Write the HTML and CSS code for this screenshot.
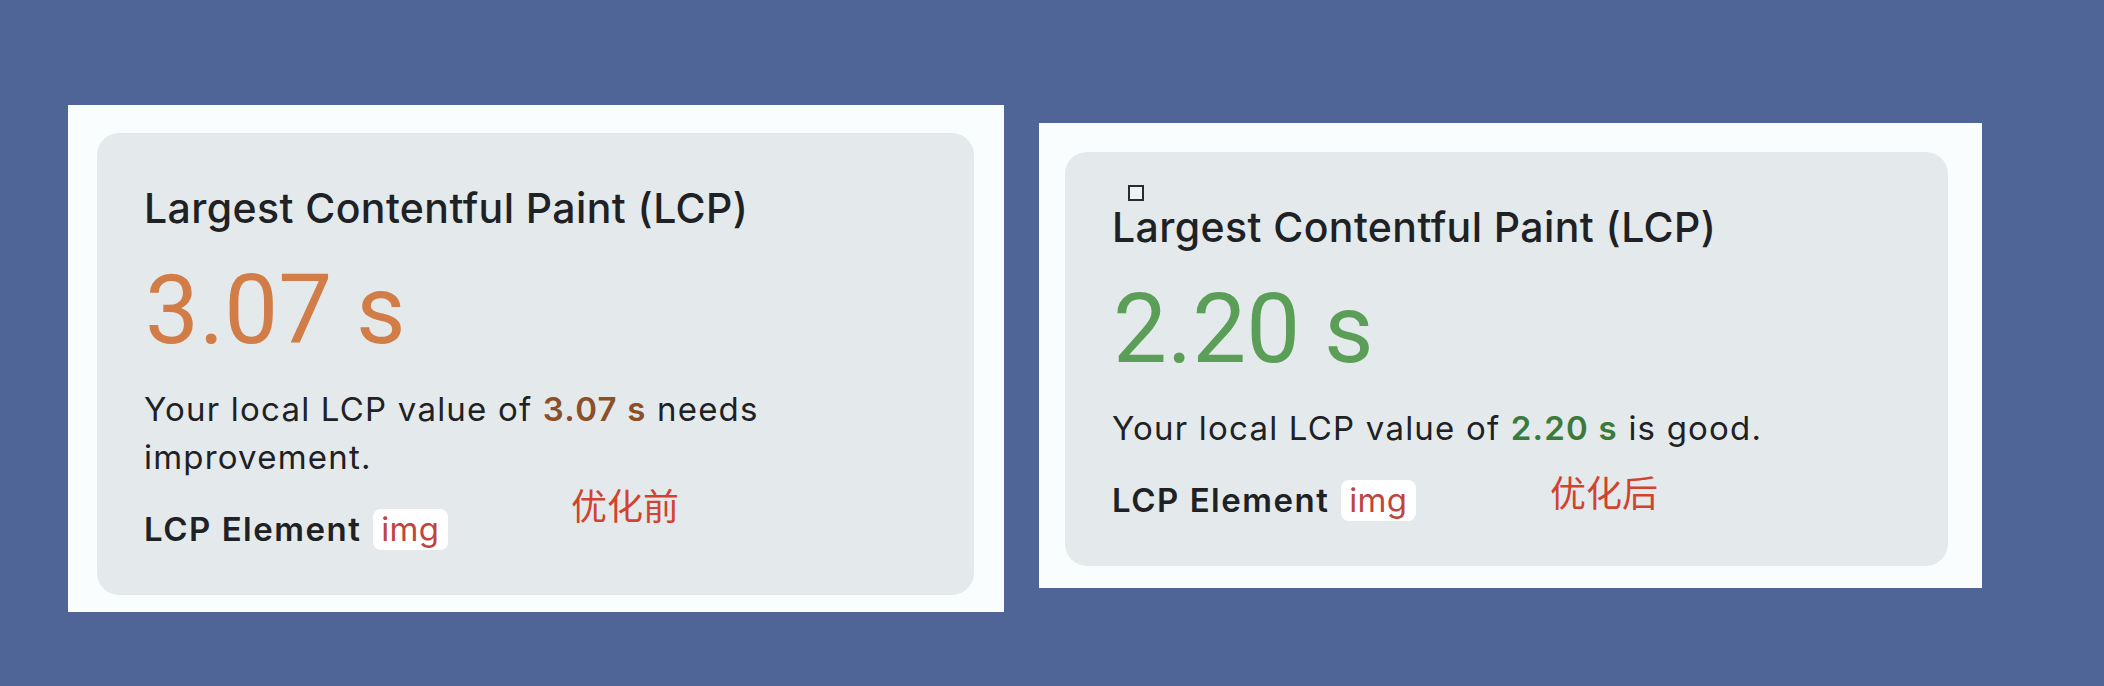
FILE: index.html
```html
<!DOCTYPE html>
<html lang="zh-CN">
<head>
  <meta charset="UTF-8" />
  <meta name="viewport" content="width=device-width, initial-scale=1.0"/>
  <title>LCP 对比</title>
<link rel="stylesheet" href="styles.css">
</head>
<body>

  <div class="compare">

    <!-- before -->
    <div class="shot shot-before">
      <div class="card">
        <div class="metric-name">Largest Contentful Paint (LCP)</div>
        <div class="metric-value warn">3.07 s</div>
        <p class="summary">Your local LCP value of <b class="warn-dark">3.07 s</b> needs<br>improvement.</p>
        <div class="element-row">LCP Element <span class="tag">img</span></div>
      </div>
      <span class="note note-before">优化前</span>
    </div>

    <!-- after -->
    <div class="shot shot-after">
      <div class="card">
        <span class="broken-img"></span>
        <div class="metric-name">Largest Contentful Paint (LCP)</div>
        <div class="metric-value good">2.20 s</div>
        <p class="summary">Your local LCP value of <b class="good-dark">2.20 s</b> is good.</p>
        <div class="element-row">LCP Element <span class="tag">img</span></div>
      </div>
      <span class="note note-after">优化后</span>
    </div>

  </div>

</body>
</html>
```

FILE: styles.css
```css
* {
  box-sizing: border-box;
}

body {
  margin: 0;
  background: #4f6598;
  font-family: Inter, 'Noto Sans', sans-serif;
  color: #202124;
}

.compare {
  display: flex;
  align-items: flex-start;
  gap: 35px;
  padding: 105px 0 0 68px;
}

.shot {
  position: relative;
  background-color: #fafdfe;
}

.shot-before {
  width: 936px;
  padding: 28px 30px 17px 29px;
}

.shot-after {
  width: 943px;
  margin-top: 18px;
  padding: 29px 34px 22px 26px;
}

.card {
  position: relative;
  background-color: #e4eaec;
  border-radius: 22px;
  padding: 51px 49px 42px 47px;
}

.metric-name {
  font-size: 41px;
  line-height: 48px;
  font-weight: 500;
  letter-spacing: 0.4px;
}

.metric-value {
  font-family: Roboto, sans-serif;
  font-size: 96px;
  line-height: 115px;
  margin-top: 21px;
  margin-left: 1px;
}

.warn { color: #d27c48; }
.good { color: #5a9e57; }
.warn-dark { color: #8b4f2a; }
.good-dark { color: #3c7a3c; }

.summary {
  margin: 17px 0 0 0;
  font-size: 33px;
  line-height: 48px;
  letter-spacing: 1.2px;
}

.summary b {
  font-weight: 600;
}

.element-row {
  margin-top: 24px;
  font-size: 33px;
  line-height: 48px;
  font-weight: 600;
  letter-spacing: 1.5px;
}

.tag {
  display: inline-block;
  line-height: 41px;
  padding: 0 8px;
  margin-left: 2px;
  border-radius: 8px;
  background-color: #ffffff;
  color: #c0453e;
  font-weight: 400;
  letter-spacing: 0.4px;
}

/* empty image placeholder sitting above the heading */
.broken-img {
  position: absolute;
  left: 63px;
  top: 33px;
  width: 16px;
  height: 16px;
  border: 2px solid #2b2b2b;
  background: #eef2f3;
}

.note {
  position: absolute;
  font-family: 'Noto Sans CJK SC', sans-serif;
  font-size: 36px;
  line-height: 1;
  color: #d2432f;
}

.note-before {
  left: 503px;
  top: 381px;
}

.note-after {
  left: 511px;
  top: 350px;
}
```
